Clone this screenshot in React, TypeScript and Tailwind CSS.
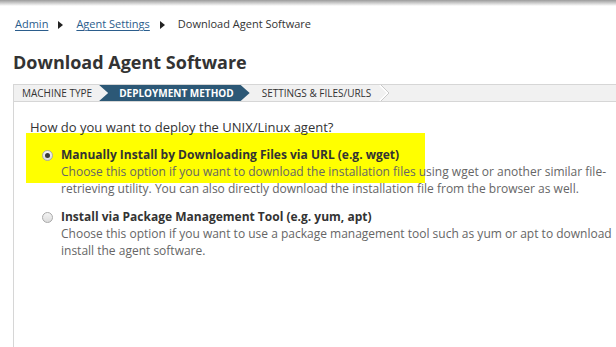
import React from "react";

const font = { fontFamily: "'Open Sans', 'Liberation Sans', sans-serif" };

function Crumb({ children }: { children: React.ReactNode }) {
  return <a className="text-[#2b5d8c] underline underline-offset-2">{children}</a>;
}

function Caret() {
  return <span className="ml-[10px] mr-[13px] inline-block h-0 w-0 border-y-[4px] border-l-[5px] border-y-transparent border-l-[#222] align-middle" />;
}

function Chevron() {
  // outline chevron after the last light tab
  return (
    <svg width="12" height="16" viewBox="0 0 12 16" className="shrink-0">
      <polyline points="1,0 9,8 1,16" fill="none" stroke="#ffffff" strokeWidth="2" />
      <polyline points="2,0 10,8 2,16" fill="none" stroke="#c9c9c9" strokeWidth="1" />
    </svg>
  );
}

function Radio({ checked }: { checked?: boolean }) {
  return (
    <span className="mt-[3px] flex h-[11px] w-[11px] shrink-0 items-center justify-center rounded-full border border-[#a9a9a9] bg-gradient-to-b from-[#f4f4f4] to-[#dcdcdc]">
      {checked && <span className="h-[5px] w-[5px] rounded-full bg-[#3a3a3a]" />}
    </span>
  );
}

function Option({ checked, title, lines }: { checked?: boolean; title: string; lines: string[] }) {
  return (
    <div className="ml-[12px] flex gap-[8px]">
      <Radio checked={checked} />
      <div className="whitespace-nowrap">
        <div className="text-[12px] font-bold leading-[16px] text-[#333]">{title}</div>
        {lines.map((l) => (
          <div key={l} className="text-[12px] leading-[17px] text-[#666]">{l}</div>
        ))}
      </div>
    </div>
  );
}

export default function App() {
  return (
    <div className="relative h-[347px] w-[616px] overflow-hidden bg-white" style={font}>
      <div className="h-[6px] bg-gradient-to-b from-[#9c9c9c] to-white" />

      {/* breadcrumb */}
      <div className="pl-[15px] pt-[10px] text-[11px] leading-[16px] text-[#333]">
        <Crumb>Admin</Crumb>
        <Caret />
        <Crumb>Agent Settings</Crumb>
        <Caret />
        <span>Download Agent Software</span>
      </div>

      <h1 className="mt-[18px] pl-[13px] text-[18px] font-bold leading-[24px] text-[#333]">Download Agent Software</h1>

      {/* wizard steps */}
      <div className="ml-[13px] mt-[10px] flex h-[18px] items-center border-y border-l border-[#d6d6d6] bg-[#f1f1f1] text-[10px] uppercase leading-none text-[#333]">
        <span className="pl-[8px] pr-[7px]">Machine Type</span>
        <div className="flex h-full items-center bg-[#2c5876] pl-[20px] pr-[16px] font-bold text-white [clip-path:polygon(0_0,calc(100%_-_9px)_0,100%_50%,calc(100%_-_9px)_100%,0_100%,9px_50%)]">
          Deployment Method
        </div>
        <span className="pl-[12px] pr-[8px]">Settings &amp; Files/URLs</span>
        <Chevron />
      </div>

      {/* content */}
      <div className="relative ml-[13px] h-full border-l border-[#d6d6d6] pl-[16px] pt-[16px]">
        <div className="absolute left-[12px] top-[31px] h-[50px] w-[399px] bg-[#ffff00]" />
        <div className="relative">
          <div className="text-[13px] leading-[18px] text-[#333]">How do you want to deploy the UNIX/Linux agent?</div>
          <div className="mt-[11px]">
            <Option
              checked
              title="Manually Install by Downloading Files via URL (e.g. wget)"
              lines={[
                "Choose this option if you want to download the installation files using wget or another similar file-",
                "retrieving utility. You can also directly download the installation file from the browser as well.",
              ]}
            />
          </div>
          <div className="mt-[12px]">
            <Option
              title="Install via Package Management Tool (e.g. yum, apt)"
              lines={[
                "Choose this option if you want to use a package management tool such as yum or apt to download",
                "install the agent software.",
              ]}
            />
          </div>
        </div>
      </div>
    </div>
  );
}
